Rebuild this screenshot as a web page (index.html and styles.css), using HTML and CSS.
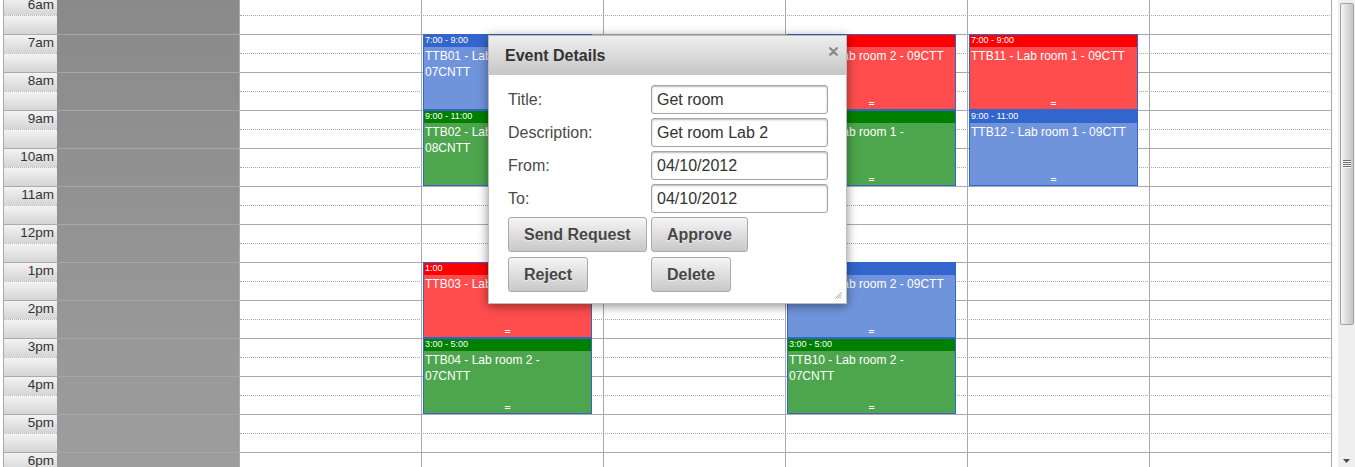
FILE: index.html
```html
<!DOCTYPE html>
<html>
<head>
<meta charset="utf-8">
<title>Room schedule</title>
<link rel="stylesheet" href="styles.css">
</head>
<body>
<div class="app">
  <div class="cal">
    <div class="grid">
      <div class="slot"><div class="time">6am</div><div class="off"></div><div class="fill"></div></div>
      <div class="slot hour"><div class="time"></div><div class="off"></div><div class="fill"></div></div>
      <div class="slot"><div class="time">7am</div><div class="off"></div><div class="fill"></div></div>
      <div class="slot hour"><div class="time"></div><div class="off"></div><div class="fill"></div></div>
      <div class="slot"><div class="time">8am</div><div class="off"></div><div class="fill"></div></div>
      <div class="slot hour"><div class="time"></div><div class="off"></div><div class="fill"></div></div>
      <div class="slot"><div class="time">9am</div><div class="off"></div><div class="fill"></div></div>
      <div class="slot hour"><div class="time"></div><div class="off"></div><div class="fill"></div></div>
      <div class="slot"><div class="time">10am</div><div class="off"></div><div class="fill"></div></div>
      <div class="slot hour"><div class="time"></div><div class="off"></div><div class="fill"></div></div>
      <div class="slot"><div class="time">11am</div><div class="off"></div><div class="fill"></div></div>
      <div class="slot hour"><div class="time"></div><div class="off"></div><div class="fill"></div></div>
      <div class="slot"><div class="time">12pm</div><div class="off"></div><div class="fill"></div></div>
      <div class="slot hour"><div class="time"></div><div class="off"></div><div class="fill"></div></div>
      <div class="slot"><div class="time">1pm</div><div class="off"></div><div class="fill"></div></div>
      <div class="slot hour"><div class="time"></div><div class="off"></div><div class="fill"></div></div>
      <div class="slot"><div class="time">2pm</div><div class="off"></div><div class="fill"></div></div>
      <div class="slot hour"><div class="time"></div><div class="off"></div><div class="fill"></div></div>
      <div class="slot"><div class="time">3pm</div><div class="off"></div><div class="fill"></div></div>
      <div class="slot hour"><div class="time"></div><div class="off"></div><div class="fill"></div></div>
      <div class="slot"><div class="time">4pm</div><div class="off"></div><div class="fill"></div></div>
      <div class="slot hour"><div class="time"></div><div class="off"></div><div class="fill"></div></div>
      <div class="slot"><div class="time">5pm</div><div class="off"></div><div class="fill"></div></div>
      <div class="slot hour"><div class="time"></div><div class="off"></div><div class="fill"></div></div>
      <div class="slot"><div class="time">6pm</div><div class="off"></div><div class="fill"></div></div>
      <div class="slot hour"><div class="time"></div><div class="off"></div><div class="fill"></div></div>
    </div>

    <div class="days">
      <div class="day"></div>
      <div class="day">
        <div class="event blue at7"><div class="head">7:00 - 9:00</div><div class="title">TTB01 - Lab room 2 - 07CNTT</div><div class="grip">=</div></div>
        <div class="event green at9"><div class="head">9:00 - 11:00</div><div class="title">TTB02 - Lab room 1 - 08CNTT</div><div class="grip">=</div></div>
        <div class="event red at13"><div class="head">1:00</div><div class="title">TTB03 - Lab room 2 - 09CTT</div><div class="grip">=</div></div>
        <div class="event green at15"><div class="head">3:00 - 5:00</div><div class="title">TTB04 - Lab room 2 - 07CNTT</div><div class="grip">=</div></div>
      </div>
      <div class="day"></div>
      <div class="day">
        <div class="event red at7"><div class="head">7:00 - 9:00</div><div class="title">TTB07 - Lab room 2 - 09CTT</div><div class="grip">=</div></div>
        <div class="event green at9"><div class="head">9:00 - 11:00</div><div class="title">TTB08 - Lab room 1 - 08CNTT</div><div class="grip">=</div></div>
        <div class="event blue at13"><div class="head">1:00 - 3:00</div><div class="title">TTB09 - Lab room 2 - 09CTT</div><div class="grip">=</div></div>
        <div class="event green at15"><div class="head">3:00 - 5:00</div><div class="title">TTB10 - Lab room 2 - 07CNTT</div><div class="grip">=</div></div>
      </div>
      <div class="day">
        <div class="event red at7"><div class="head">7:00 - 9:00</div><div class="title">TTB11 - Lab room 1 - 09CTT</div><div class="grip">=</div></div>
        <div class="event blue at9"><div class="head">9:00 - 11:00</div><div class="title">TTB12 - Lab room 1 - 09CTT</div><div class="grip">=</div></div>
      </div>
      <div class="day"></div>
    </div>

    <div class="dialog">
      <div class="dlg-head">
        Event Details
        <svg class="close" width="9" height="9" viewBox="0 0 9 9"><path d="M1.2 1.2L7.8 7.8M7.8 1.2L1.2 7.8" stroke="#8a8a8a" stroke-width="2.3" stroke-linecap="round"/></svg>
      </div>
      <div class="dlg-body">
        <label class="lbl">Title:</label>
        <div class="input">Get room</div>
        <label class="lbl">Description:</label>
        <div class="input">Get room Lab 2</div>
        <label class="lbl">From:</label>
        <div class="input">04/10/2012</div>
        <label class="lbl">To:</label>
        <div class="input">04/10/2012</div>
        <button class="btn">Send Request</button>
        <button class="btn">Approve</button>
        <button class="btn row2">Reject</button>
        <button class="btn row2">Delete</button>
      </div>
      <svg class="resize" width="7" height="7" viewBox="0 0 7 7"><path d="M6.5 0.5L0.5 6.5M6.5 3L3 6.5M6.5 5.5L5.5 6.5" stroke="#9a9a9a" stroke-width="1"/></svg>
    </div>
  </div>

  <div class="scrollbar">
    <div class="thumb">
      <svg width="8" height="8" viewBox="0 0 8 8"><path d="M0 0.5H8M0 2.5H8M0 4.5H8M0 6.5H8" stroke="#6e6e6e"/><path d="M0 1.5H8M0 3.5H8M0 5.5H8M0 7.5H8" stroke="#f8f8f8"/></svg>
    </div>
    <svg class="arrow" width="7" height="4" viewBox="0 0 7 4"><path d="M0 0H7L3.5 4Z" fill="#4d4d4d"/></svg>
  </div>
</div>
</body>
</html>
```

FILE: styles.css
```css
html, body {
  margin: 0;
  padding: 0;
  background: #fff;
  overflow: hidden;
}

body {
  font-family: "Liberation Sans", Arial, sans-serif;
}

.app {
  display: flex;
  width: 1355px;
  height: 467px;
}

.cal {
  position: relative;
  flex: 1;
  height: 467px;
  overflow: hidden;
  padding-left: 3px;
}

/* slot grid (scrolled 3px) */
.grid {
  margin-top: -3px;
}

.slot {
  display: flex;
  height: 19px;
}

.time {
  box-sizing: border-box;
  width: 54px;
  border-left: 1px solid #aaa;
  border-bottom: 1px dotted #b8b8b8;
  background: linear-gradient(#f3f3f3, #d5d5d5);
  text-align: right;
  padding-right: 3px;
  font-size: 13.5px;
  line-height: 16px;
  color: #333;
  white-space: nowrap;
}

.off {
  box-sizing: border-box;
  width: 183px;
  border-right: 1px solid #ababab;
  border-bottom: 1px solid transparent;
  background: linear-gradient(#8a8a8a, #9d9d9d) fixed;
}

.fill {
  box-sizing: border-box;
  width: 1092px;
  border-bottom: 1px dotted #a8a8a8;
}

.slot.hour .time {
  border-bottom: 1px solid #aaa;
}

.slot.hour .off {
  border-bottom: 1px solid #a7a7a7;
}

.slot.hour .fill {
  border-bottom: 1px solid #aaa;
}

/* day columns with events, over the slot grid */
.days {
  position: absolute;
  left: 240px;
  top: -3px;
  width: 1092px;
  height: 480px;
  display: flex;
}

.day {
  position: relative;
  box-sizing: border-box;
  width: 182px;
  border-right: 1px solid #aaa;
}

.event {
  position: absolute;
  left: 1px;
  width: 169px;
  height: 76px;
  box-sizing: border-box;
  border: 1px solid #3366cc;
  color: #fff;
  overflow: hidden;
}

.at7 { top: 37px; }
.at9 { top: 113px; }
.at13 { top: 265px; }
.at15 { top: 341px; }

.event .head {
  height: 12px;
  font-size: 9px;
  line-height: 11px;
  padding-left: 1px;
  white-space: nowrap;
}

.event .title {
  font-size: 12px;
  line-height: 16px;
  padding: 1px 8px 0 1px;
}

.event .grip {
  position: absolute;
  left: 0;
  right: 0;
  bottom: 0;
  height: 10px;
  text-align: center;
  font-family: "DejaVu Sans Mono", monospace;
  font-size: 10px;
  line-height: 10px;
}

.red { background: #ff4d4d; }
.red .head { background: #ff0000; }
.green { background: #4da64d; }
.green .head { background: #008000; }
.blue { background: #7094db; }
.blue .head { background: #3366cc; }

/* dialog */
.dialog {
  position: absolute;
  left: 488px;
  top: 35px;
  width: 359px;
  height: 269px;
  box-sizing: border-box;
  border: 1px solid #bcbcbc;
  background: #fff;
  box-shadow: 0 2px 10px rgba(0, 0, 0, 0.45);
}

.dlg-head {
  position: relative;
  height: 39px;
  box-sizing: border-box;
  padding: 1px 0 0 16px;
  background: linear-gradient(#eeeeee, #c6c6c6);
  font-weight: bold;
  font-size: 16px;
  line-height: 38px;
  color: #333;
}

.close {
  position: absolute;
  left: 340px;
  top: 11px;
}

.dlg-body {
  display: grid;
  grid-template-columns: 143px 177px;
  row-gap: 4px;
  padding: 10px 0 0 19px;
}

.lbl {
  align-self: center;
  font-size: 16px;
  line-height: 18px;
  color: #4a4a4a;
}

.input {
  box-sizing: border-box;
  height: 29px;
  border: 1px solid #a4a4a4;
  border-radius: 3px;
  box-shadow: inset 0 1px 2px rgba(0, 0, 0, 0.28);
  padding-left: 5px;
  font-size: 16px;
  line-height: 27px;
  color: #333;
  background: #fff;
}

.btn {
  justify-self: start;
  box-sizing: border-box;
  height: 35px;
  padding: 0 15px;
  margin: 0;
  border: 1px solid #a9a9a9;
  border-radius: 3px;
  background: linear-gradient(#f5f5f5, #c8c8c8);
  font-family: "Liberation Sans", Arial, sans-serif;
  font-weight: bold;
  font-size: 16px;
  color: #474747;
  text-shadow: 0 1px 0 rgba(255, 255, 255, 0.6);
}

.btn.row2 {
  margin-top: 1px;
}

.resize {
  position: absolute;
  right: 4px;
  bottom: 4px;
}

/* scrollbar */
.scrollbar {
  flex: none;
  width: 17px;
  height: 467px;
  background: #efefef;
  display: flex;
  flex-direction: column;
}

.thumb {
  box-sizing: border-box;
  margin: 3px 0 0 2px;
  width: 14px;
  height: 322px;
  border: 1px solid #a0a0a0;
  border-radius: 2px;
  background: linear-gradient(to right, #f4f4f4, #dedede 45%, #c6c6c6);
  display: flex;
  align-items: center;
  justify-content: center;
}

.arrow {
  margin: auto 0 4px 5px;
}
```
